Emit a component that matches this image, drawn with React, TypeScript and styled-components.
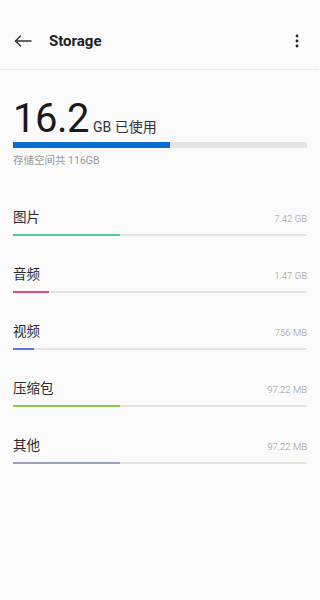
import React from "react";
import styled, { createGlobalStyle } from "styled-components";

const Global = createGlobalStyle`
  html, body { margin: 0; padding: 0; background: #fafafa; }
  body { font-family: Roboto, "Noto Sans CJK SC", sans-serif; -webkit-font-smoothing: antialiased; }
`;

const Page = styled.div`
  width: 319px;
  min-height: 600px;
  background: #fafafa;
`;

const Header = styled.header`
  height: 56px;
  padding-top: 13px;
  border-bottom: 1px solid #e8e8e8;
  display: flex;
  align-items: center;
  padding-left: 13px;
  padding-right: 12px;
`;

const IconButton = styled.div`
  width: 20px;
  display: flex;
  align-items: center;
  justify-content: center;
  color: #333;
`;

const Title = styled.h1`
  margin: 0 0 0 16px;
  flex: 1;
  font-family: Roboto, sans-serif;
  font-size: 15px;
  font-weight: 700;
  color: #222;
  line-height: 20px;
`;

const Usage = styled.section`
  padding: 29px 12px 0 13px;
`;

const BigRow = styled.div`
  display: flex;
  align-items: baseline;
  gap: 4px;
`;

const BigNumber = styled.span`
  font-family: Roboto, sans-serif;
  font-size: 40px;
  line-height: 40px;
  font-weight: 400;
  color: #1a1a1a;
  letter-spacing: -0.5px;
`;

const BigUnit = styled.span`
  font-family: Roboto, "Noto Sans CJK SC", sans-serif;
  font-size: 14px;
  color: #333;
`;

const Track = styled.div<{ $h: number; $mt: number }>`
  height: ${(p) => p.$h}px;
  margin-top: ${(p) => p.$mt}px;
  background: #e4e4e4;
  display: flex;
`;

const Fill = styled.div<{ $color: string }>`
  height: 100%;
  background: ${(p) => p.$color};
`;

const Subtitle = styled.div`
  margin-top: 6px;
  font-family: Roboto, "Noto Sans CJK SC", sans-serif;
  font-size: 10.5px;
  line-height: 14px;
  color: #9a9a9a;
`;

const List = styled.ul`
  list-style: none;
  margin: 39px 0 0;
  padding: 0 12px 0 13px;
`;

const Item = styled.li`
  margin-bottom: 28px;
`;

const ItemTop = styled.div`
  display: flex;
  align-items: baseline;
  justify-content: space-between;
  height: 18px;
`;

const Label = styled.span`
  font-family: "Noto Sans CJK SC", sans-serif;
  font-size: 13.5px;
  line-height: 18px;
  color: #2a2a2a;
`;

const Value = styled.span`
  font-family: Roboto, sans-serif;
  font-size: 9.5px;
  font-weight: 300;
  color: #999;
`;

const items = [
  { label: "图片", value: "7.42 GB", color: "#4fcaa8", w: 107 },
  { label: "音频", value: "1.47 GB", color: "#e4497a", w: 36 },
  { label: "视频", value: "756 MB", color: "#5b77dd", w: 21 },
  { label: "压缩包", value: "97.22 MB", color: "#8dca4a", w: 107 },
  { label: "其他", value: "97.22 MB", color: "#98a0be", w: 107 },
];

export default function App() {
  return (
    <Page>
      <Global />
      <Header>
        <IconButton>
          <svg width="18" height="12" viewBox="0 0 18 12" fill="none" stroke="#333" strokeWidth="1.4" strokeLinecap="round" strokeLinejoin="round">
            <path d="M1.5 6H17" />
            <path d="M6.5 1L1.5 6L6.5 11" />
          </svg>
        </IconButton>
        <Title>Storage</Title>
        <IconButton>
          <svg width="4" height="14" viewBox="0 0 4 14" fill="#222">
            <circle cx="2" cy="2" r="1.4" />
            <circle cx="2" cy="7" r="1.4" />
            <circle cx="2" cy="12" r="1.4" />
          </svg>
        </IconButton>
      </Header>
      <Usage>
        <BigRow>
          <BigNumber>16.2</BigNumber>
          <BigUnit>GB 已使用</BigUnit>
        </BigRow>
        <Track $h={6} $mt={3}>
          <Fill $color="#0a6fcf" style={{ width: 157 }} />
        </Track>
        <Subtitle>存储空间共 116GB</Subtitle>
      </Usage>
      <List>
        {items.map((it) => (
          <Item key={it.label}>
            <ItemTop>
              <Label>{it.label}</Label>
              <Value>{it.value}</Value>
            </ItemTop>
            <Track $h={2} $mt={9}>
              <Fill $color={it.color} style={{ width: it.w }} />
            </Track>
          </Item>
        ))}
      </List>
    </Page>
  );
}
